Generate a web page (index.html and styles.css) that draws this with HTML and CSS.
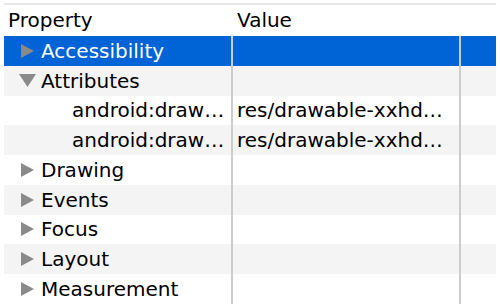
FILE: index.html
```html
<!DOCTYPE html>
<html lang="en">
  <head>
    <meta charset="UTF-8" />
    <title>Properties</title>
    <link rel="stylesheet" href="styles.css">
  </head>
  <body>
    <div class="props">
      <div class="props-head">
        <div class="cell name">Property</div>
        <div class="cell value">Value</div>
        <div class="cell rest"></div>
      </div>

      <div class="row selected">
        <div class="cell name">
          <svg class="arrow" viewBox="0 0 13 14"><polygon points="0,0 13,7 0,14" /></svg>
          Accessibility
        </div>
        <div class="cell value"></div>
        <div class="cell rest"></div>
      </div>
      <div class="row">
        <div class="cell name">
          <svg class="arrow down" viewBox="0 0 17 13"><polygon points="0,0 17,0 8.5,13" /></svg>
          Attributes
        </div>
        <div class="cell value"></div>
        <div class="cell rest"></div>
      </div>
      <div class="row">
        <div class="cell name child">android:draw…</div>
        <div class="cell value">res/drawable-xxhd…</div>
        <div class="cell rest"></div>
      </div>
      <div class="row">
        <div class="cell name child">android:draw…</div>
        <div class="cell value">res/drawable-xxhd…</div>
        <div class="cell rest"></div>
      </div>
      <div class="row">
        <div class="cell name">
          <svg class="arrow" viewBox="0 0 13 14"><polygon points="0,0 13,7 0,14" /></svg>
          Drawing
        </div>
        <div class="cell value"></div>
        <div class="cell rest"></div>
      </div>
      <div class="row">
        <div class="cell name">
          <svg class="arrow" viewBox="0 0 13 14"><polygon points="0,0 13,7 0,14" /></svg>
          Events
        </div>
        <div class="cell value"></div>
        <div class="cell rest"></div>
      </div>
      <div class="row">
        <div class="cell name">
          <svg class="arrow" viewBox="0 0 13 14"><polygon points="0,0 13,7 0,14" /></svg>
          Focus
        </div>
        <div class="cell value"></div>
        <div class="cell rest"></div>
      </div>
      <div class="row">
        <div class="cell name">
          <svg class="arrow" viewBox="0 0 13 14"><polygon points="0,0 13,7 0,14" /></svg>
          Layout
        </div>
        <div class="cell value"></div>
        <div class="cell rest"></div>
      </div>
      <div class="row">
        <div class="cell name">
          <svg class="arrow" viewBox="0 0 13 14"><polygon points="0,0 13,7 0,14" /></svg>
          Measurement
        </div>
        <div class="cell value"></div>
        <div class="cell rest"></div>
      </div>
    </div>
  </body>
</html>
```

FILE: styles.css
```css
body {
  margin: 0;
  padding-top: 3px;
  background-color: #fff;
  font-family: "DejaVu Sans", sans-serif;
  font-size: 20px;
  color: #000;
  overflow: hidden;
}
.props {
  margin: 0 4px;
  border-top: 2px solid #e8e8e8;
}
.props-head,
.row {
  display: flex;
  align-items: stretch;
}
.props-head {
  height: 31px;
}
.row {
  height: 29.75px;
}
.row:nth-child(odd) {
  background-color: #f4f4f4;
}
.row.selected {
  background-color: #0063d6;
  color: #fff;
}
.cell {
  display: flex;
  align-items: center;
  white-space: nowrap;
  overflow: hidden;
}
.name {
  width: 227px;
  padding-left: 17px;
  box-sizing: border-box;
}
.props-head .name {
  padding-left: 4px;
  padding-bottom: 2px;
}
.value {
  width: 228px;
  padding-left: 4px;
  box-sizing: border-box;
  border-left: 2px solid #cccccc;
}
.rest {
  flex: 1;
  border-left: 2px solid #cccccc;
}
.props-head .value,
.props-head .rest {
  border-left-color: transparent;
  position: relative;
  padding-bottom: 2px;
}
.props-head .value::before,
.props-head .rest::before {
  content: "";
  position: absolute;
  left: -2px;
  top: 5px;
  bottom: 5px;
  width: 2px;
  background-color: #e4e4e4;
}
.arrow {
  width: 13px;
  height: 14px;
  margin-right: 7px;
  fill: #8a8a8a;
  flex-shrink: 0;
}
.arrow.down {
  width: 17px;
  height: 13px;
  margin-left: -2px;
  margin-right: 5px;
}
.child {
  padding-left: 68px;
}
```
